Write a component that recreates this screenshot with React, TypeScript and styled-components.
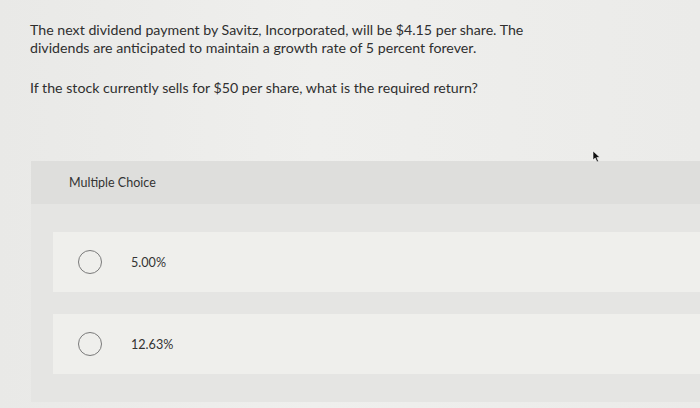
import React, { FC } from 'react';
import styled, { createGlobalStyle } from 'styled-components';

const GlobalStyle = createGlobalStyle`
  html, body {
    margin: 0;
    padding: 0;
    background: #ebebe9;
  }
  body {
    font-family: Lato, 'Liberation Sans', sans-serif;
    color: #2f2f2f;
  }
`;

const Page = styled.div`
  position: relative;
  width: 700px;
  height: 408px;
  overflow: hidden;
  background: linear-gradient(90deg, #e9e9e7 0%, #efefed 45%, #ebebe9 100%);
`;

const Prompt = styled.div`
  padding: 21px 0 0 30px;
  font-size: 14.2px;
  line-height: 18px;

  p {
    margin: 0 0 22px;
    width: 510px;
  }
`;

const Panel = styled.section`
  margin: 64px 0 0 31px;
  background: #e5e5e3;
  padding-bottom: 28px;
`;

const PanelHeader = styled.div`
  height: 43px;
  display: flex;
  align-items: center;
  padding-left: 38px;
  background: #dededc;
  font-size: 12.5px;
  color: #333;
`;

const Options = styled.div`
  display: flex;
  flex-direction: column;
  gap: 22px;
  padding: 28px 0 0 22px;
`;

const Option = styled.label`
  height: 60px;
  display: flex;
  align-items: center;
  background: #efefec;
  padding-left: 25px;
  font-size: 12.6px;
  color: #333;
`;

const Radio = styled.span`
  width: 22px;
  height: 22px;
  border: 1.5px solid #7a7a7a;
  border-radius: 50%;
  margin-right: 29px;
  flex-shrink: 0;
`;

const Cursor = styled.svg`
  position: absolute;
  left: 592px;
  top: 150px;
`;

interface ChoiceProps {
  label: string;
}

const Choice: FC<ChoiceProps> = ({ label }) => (
  <Option>
    <Radio />
    <span>{label}</span>
  </Option>
);

const App: FC = () => (
  <Page>
    <GlobalStyle />
    <Prompt>
      <p>
        The next dividend payment by Savitz, Incorporated, will be $4.15 per share. The dividends are anticipated to
        maintain a growth rate of 5 percent forever.
      </p>
      <p>If the stock currently sells for $50 per share, what is the required return?</p>
    </Prompt>
    <Panel>
      <PanelHeader>Multiple Choice</PanelHeader>
      <Options>
        <Choice label="5.00%" />
        <Choice label="12.63%" />
      </Options>
    </Panel>
    <Cursor width="9" height="13" viewBox="0 0 9 13">
      <path d="M1 1 L1 10 L3.2 8 L5 12 L6.5 11.3 L4.8 7.5 L8 7.5 Z" fill="#111" stroke="#fff" strokeWidth="0.6" />
    </Cursor>
  </Page>
);

export default App;
